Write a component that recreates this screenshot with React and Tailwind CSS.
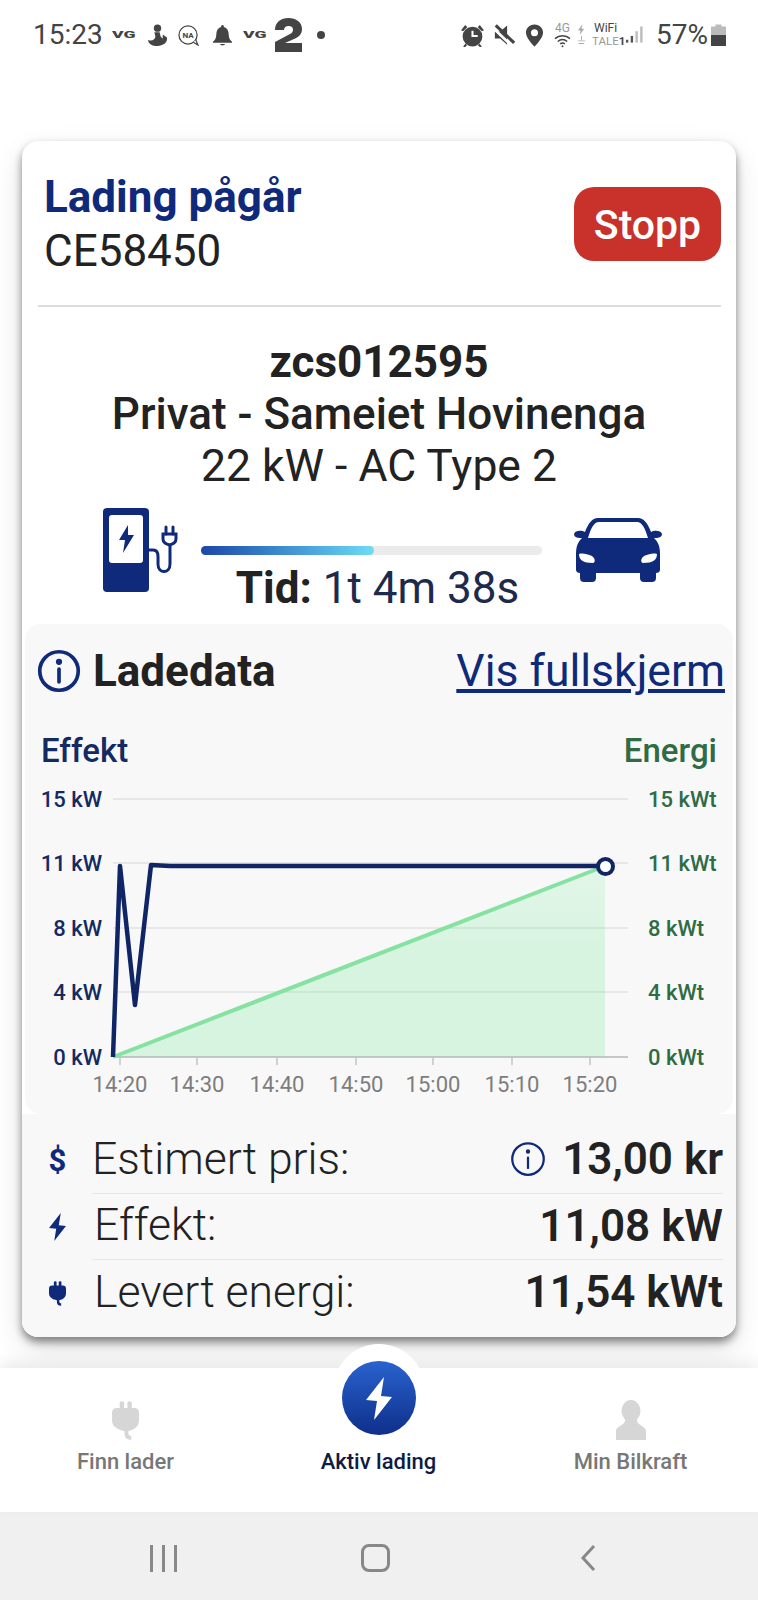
const NAVY = '#0f2a7a'

function Bolt({ className }) {
  return (
    <svg viewBox="0 0 26 43" className={className} fill="currentColor">
      <path d="M18 0 L0 23 L11 24 L8 43 L26 20 L15 19 Z" />
    </svg>
  )
}

function Plug({ className }) {
  return (
    <svg viewBox="0 0 28 40" className={className} fill="currentColor">
      <rect x="8" y="0" width="4.500" height="11" rx="2" />
      <rect x="16" y="0" width="4.500" height="11" rx="2" />
      <path d="M5 7 H23 C26 7 28 9 28 12 V20 C28 26 23 30 17 31 V33 C17 35 18 36 20 36 V40 C15 40 13 38 13 33 V31 C6 30 0 26 0 20 V12 C0 9 2 7 5 7 Z" />
    </svg>
  )
}

function InfoIcon({ className, strokeWidth = 2 }) {
  return (
    <svg viewBox="0 0 24 24" className={className} fill="none" stroke="currentColor" strokeWidth={strokeWidth}>
      <circle cx="12" cy="12" r="10.500" />
      <path d="M12 11 V18" strokeLinecap="round" />
      <circle cx="12" cy="7" r="0.700" fill="currentColor" />
    </svg>
  )
}

function VgMark({ className }) {
  return <span className={`w-[23px] text-[11px] leading-none font-black scale-x-[1.6] scale-y-75 origin-left ${className}`}>VG</span>
}

function StatusBar() {
  return (
    <div className="h-[70px] flex items-center justify-between pl-[33px] pr-[32px] text-[#444]">
      <div className="flex items-center">
        <span className="text-[28px] leading-none w-[79px]">15:23</span>
        <VgMark className="" />
        <svg viewBox="0 0 20 22" className="w-[21px] h-[23px] ml-[12px]" fill="currentColor">
          <circle cx="10" cy="4" r="3.500" />
          <path d="M7 8 L12 8 L13 12 L15 14 L15 10 L19 13 C20 18 15 21 10 21 C5 21 1 19 1 15 C4 17 8 15 8 12 Z" />
        </svg>
        <svg viewBox="0 0 22 22" className="w-[21px] h-[21px] ml-[10px]" fill="none" stroke="currentColor" strokeWidth="1.300">
          <circle cx="10.500" cy="10.500" r="9.500" />
          <path d="M16 18 L21 21 L18.500 15.500" fill="#fff" />
          <text x="10.500" y="13.500" textAnchor="middle" fontSize="8.500" fontWeight="700" fill="currentColor" stroke="none">NA</text>
        </svg>
        <svg viewBox="0 0 22 24" className="w-[21px] h-[23px] ml-[13px]" fill="currentColor">
          <path d="M11 1 C12 1 12.500 2 12.500 3 C16 4 17.500 7 17.500 11 C17.500 15 19 17 21 18.500 V19.500 H1 V18.500 C3 17 4.500 15 4.500 11 C4.500 7 6 4 9.500 3 C9.500 2 10 1 11 1 Z" />
          <path d="M8.500 21 H13.500 C13.500 23 8.500 23 8.500 21 Z" />
        </svg>
        <VgMark className="ml-[10px]" />
        <svg viewBox="0 0 27 34" className="w-[27px] h-[34px] ml-[9px]" fill="currentColor">
          <path d="M0 12 C0 4 6 0 13.500 0 C21 0 27 4 27 11 C27 16 24 19 19 21 L10 25 H27 V34 H0 V24 L15 16 C17 15 18 13.500 18 11.500 C18 9 16 8 13.500 8 C11 8 9 9.500 9 12 Z" />
        </svg>
        <span className="ml-[15px] w-[8px] h-[8px] rounded-full bg-[#444]" />
      </div>
      <div className="flex items-center">
        <svg viewBox="0 0 24 24" className="w-[25px] h-[25px]" fill="currentColor">
          <path d="M1 7 L5 2 L7 4 L3 8 Z M23 7 L19 2 L17 4 L21 8 Z" />
          <path fillRule="evenodd" d="M12 3.500 A9.500 9.500 0 1 1 12 22.500 A9.500 9.500 0 1 1 12 3.500 Z M11 7.500 V13.500 H17 V11.500 H13 V7.500 Z" />
          <path d="M5 20 L3 23 H5 L7 21 Z M19 20 L21 23 H19 L17 21 Z" />
        </svg>
        <svg viewBox="0 0 24 24" className="w-[21px] h-[22px] ml-[9px]" fill="currentColor">
          <path d="M1 8 H7 L15 1 V23 L7 16 H1 Z" />
          <path d="M-1 4 L20 24" stroke="#fff" strokeWidth="3" />
          <path d="M2 1 L23 21" stroke="currentColor" strokeWidth="3.500" />
        </svg>
        <svg viewBox="0 0 20 24" className="w-[19px] h-[23px] ml-[10px]" fill="currentColor">
          <path fillRule="evenodd" d="M10 0.500 C15.500 0.500 19 4.500 19 9 C19 15 10 23.500 10 23.500 C10 23.500 1 15 1 9 C1 4.500 4.500 0.500 10 0.500 Z M10 5.500 A3.700 3.700 0 1 0 10 12.900 A3.700 3.700 0 1 0 10 5.500 Z" />
        </svg>
        <div className="ml-[10px] w-[17px] flex flex-col items-center text-[#999]">
          <span className="text-[12px] leading-[12px]">4G</span>
          <svg viewBox="0 0 18 14" className="w-[17px] h-[14px]" fill="none" stroke="#444" strokeWidth="1.500">
            <path d="M1 4.500 C5.500 0.500 12.500 0.500 17 4.500 M4 7.500 C7 5 11 5 14 7.500 M6.500 10 C8 9 10 9 11.500 10" />
            <circle cx="9" cy="12.500" r="1" fill="#444" stroke="none" />
          </svg>
        </div>
        <svg viewBox="0 0 10 24" className="w-[9px] h-[22px] ml-[6px]" fill="#aaa">
          <path d="M6 0 L1 7 H4 L3 12 L8 5 H5 Z M1 18 H9 V19 H1 Z M2 21 H8 V22 H2 Z" />
          <rect x="4.500" y="13" width="1" height="5" />
        </svg>
        <div className="ml-[6px] w-[28px] flex flex-col items-start">
          <span className="text-[12px] leading-[13px] ml-[2px] text-[#444]">WiFi</span>
          <span className="text-[11.500px] leading-[13px] text-[#999] whitespace-nowrap">TALE<b className="text-[#444]">1</b></span>
        </div>
        <svg viewBox="0 0 20 22" className="w-[19px] h-[22px] ml-[5px]">
          <rect x="1" y="16" width="2.500" height="3" fill="#555" />
          <rect x="6" y="12" width="2.500" height="7" fill="#555" />
          <rect x="11" y="7" width="2.500" height="12" fill="#bbb" />
          <rect x="16" y="2" width="2.500" height="17" fill="#bbb" />
        </svg>
        <span className="ml-[12px] text-[28px] leading-none">57%</span>
        <svg viewBox="0 0 15 22" className="w-[15px] h-[22px] ml-[3px]">
          <path d="M4.500 0.500 H10.500 V2.500 H15 V11 H0 V2.500 H4.500 Z" fill="#bbb" />
          <rect x="0" y="11" width="15" height="11" fill="#444" />
        </svg>
      </div>
    </div>
  )
}

function ChargerIcon() {
  return (
    <svg viewBox="0 0 75 84" className="w-[75px] h-[84px]">
      <rect x="0" y="0" width="46" height="84" rx="4" fill={NAVY} />
      <rect x="6" y="7" width="34" height="48" rx="3" fill="#fff" />
      <path d="M25 17 L16 32 L22 32 L20 45 L31 27 L25 27 Z" fill={NAVY} />
      <path d="M46 42 H50 C56 42 55 48 55 56 C55 66 67 66 67 56 V36" fill="none" stroke={NAVY} strokeWidth="3" />
      <path d="M60 26 H73 V31 C73 35 70 36 66.500 37 C63 36 60 35 60 31 Z" fill="none" stroke={NAVY} strokeWidth="3" />
      <path d="M63 19 V26 M70 19 V26" stroke={NAVY} strokeWidth="3" strokeLinecap="round" />
    </svg>
  )
}

function CarIcon() {
  return (
    <svg viewBox="0 0 88 64" className="w-[88px] h-[64px]">
      <path fill={NAVY} fillRule="evenodd" d="M24 0 H64 C70 0 74 6 77 14 C80 12 87 12 88 16 C88 20 83 20 80 20 C84 24 86 28 86 36 V52 C86 54 84 55 82 55 V60 C82 63 80 64 78 64 H70 C67 64 66 62 66 60 V55 H22 V60 C22 62 21 64 18 64 H10 C8 64 6 63 6 60 V55 C4 55 2 54 2 52 V36 C2 28 4 24 8 20 C5 20 0 20 0 16 C1 12 8 12 11 14 C14 6 18 0 24 0 Z M25 4 C20 4 17 10 14 20 H74 C71 10 68 4 63 4 Z M5 36 C5 42 9 45 19 45 C21 45 22 41 18 38 C13 36 9 35 5 36 Z M83 36 C79 35 75 36 70 38 C66 41 67 45 69 45 C79 45 83 42 83 36 Z" />
    </svg>
  )
}

function Chart() {
  const ys = [[799, '15'], [863, '11'], [928, '8'], [992, '4'], [1057, '0']]
  const xs = [[120, '14:20'], [197, '14:30'], [277, '14:40'], [356, '14:50'], [433, '15:00'], [512, '15:10'], [590, '15:20']]
  return (
    <svg viewBox="25 770 707 344" className="w-[707px] h-[344px] block">
      <defs>
        <linearGradient id="energyFill" x1="0" y1="0" x2="0" y2="1">
          <stop offset="0" stopColor="#74e898" stopOpacity="0.16" />
          <stop offset="0.45" stopColor="#74e898" stopOpacity="0.25" />
        </linearGradient>
      </defs>
      {ys.slice(0, 4).map(([y]) => (
        <line key={y} x1="113" x2="628" y1={y} y2={y} stroke="#e2e2e2" strokeWidth="1.500" />
      ))}
      <path d="M113 1057 L605 866 V1057 Z" fill="url(#energyFill)" />
      <line x1="113" x2="628" y1="1057" y2="1057" stroke="#b4b8b5" strokeWidth="1.500" />
      {xs.map(([x, label]) => (
        <g key={label}>
          <line x1={x} x2={x} y1="1057" y2="1065" stroke="#c4c4c4" strokeWidth="1.500" />
          <text x={x} y="1092" textAnchor="middle" className="text-[22px] fill-[#7d7d7d]">{label}</text>
        </g>
      ))}
      {ys.map(([y, v]) => (
        <g key={v} className="text-[22px] font-medium">
          <text x="102" y={y + 8} textAnchor="end" className="fill-[#142a63]">{v} kW</text>
          <text x="648" y={y + 8} className="fill-[#2f6b45]">{v} kWt</text>
        </g>
      ))}
      <path d="M113 1057 L605 866" stroke="#86e2a1" strokeWidth="4" fill="none" />
      <path d="M113 1057 L120 866 L135 1005 L151 865 L170 866 H605" stroke="#0f2566" strokeWidth="4.500" fill="none" strokeLinejoin="round" />
      <circle cx="605.500" cy="866.500" r="7.500" fill="#fff" stroke="#0f2566" strokeWidth="4" />
    </svg>
  )
}

function Row({ icon, label, children, last, className, labelClass }) {
  return (
    <div className={`flex items-center ${className}`}>
      <div className="w-[70px] flex justify-center text-[#0f2a7a] shrink-0 pl-[1px]">{icon}</div>
      <div className={`flex-1 h-full flex items-center justify-between pb-[2px] ${last ? '' : 'border-b border-[#e6e6e6]'}`}>
        <span className={`text-[44.500px] font-light text-[#222] leading-none ${labelClass}`}>{label}</span>
        {children}
      </div>
    </div>
  )
}

function Tab({ icon, label }) {
  return (
    <div className="flex flex-col items-center justify-end w-[253px] pb-[37px]">
      {icon}
      <span className="text-[22px] leading-[26px] font-medium mt-[9px] text-[#777]">{label}</span>
    </div>
  )
}

export default function App() {
  return (
    <div className="w-[758px] h-[1600px] overflow-hidden bg-white flex flex-col font-['Roboto',sans-serif]">
      <StatusBar />

      <div className="mt-[71px] mx-[22px] w-[714px] h-[1196px] rounded-[16px] bg-white shadow-[0_5px_9px_rgba(0,0,0,0.45),0_12px_30px_rgba(0,0,0,0.12)] flex flex-col shrink-0">
        <div className="mx-[16px] mr-[15px] h-[166px] border-b-2 border-[#dcdcdc] flex justify-between items-start">
          <div className="pl-[6px] pt-[29px]">
            <div className="text-[44px] font-bold leading-[54px] text-[#0f2a7a]">Lading pågår</div>
            <div className="text-[44px] leading-[54px] text-[#222]">CE58450</div>
          </div>
          <button className="mt-[46px] w-[147px] h-[74px] pt-[3px] rounded-[20px] bg-[#c8322b] text-white text-[41px] font-medium">Stopp</button>
        </div>

        <div className="mt-[29px] text-center text-[44px] leading-[52px] text-[#222]">
          <div className="font-bold">zcs012595</div>
          <div className="font-medium">Privat - Sameiet Hovinenga</div>
          <div className="text-[44.500px]">22 kW - AC Type 2</div>
        </div>

        <div className="mt-[16px] h-[116px] flex items-start pl-[81px]">
          <ChargerIcon />
          <div className="ml-[23px] w-[341px] flex flex-col items-center pt-[38px]">
            <div className="w-full h-[9px] rounded-full bg-[#ebebeb]">
              <div className="h-full w-[173px] rounded-full bg-gradient-to-r from-[#1f46a8] to-[#6fdcf5]" />
            </div>
            <div className="text-[44px] leading-[48px] mt-[9px] ml-[12px] text-[#1c2a4d] whitespace-nowrap">
              <span className="font-bold text-[#222]">Tid:</span> 1t 4m 38s
            </div>
          </div>
          <div className="ml-[32px] pt-[10px]"><CarIcon /></div>
        </div>

        <div className="mx-[3px] rounded-[16px] bg-[#f8f8f8] h-[490px] shrink-0">
          <div className="h-[106px] flex items-center justify-between pl-[12px] pr-[8px] pb-[12px]">
            <div className="flex items-center">
              <InfoIcon className="w-[44px] h-[44px] text-[#0f2a7a]" />
              <span className="ml-[12px] text-[44px] font-bold text-[#222] leading-none">Ladedata</span>
            </div>
            <a className="text-[44.500px] text-[#0f2a7a] underline leading-none">Vis fullskjerm</a>
          </div>
          <div className="h-[40px] flex items-center justify-between pl-[16px] pr-[16px] text-[33px] font-medium leading-none">
            <span className="text-[#142a63]">Effekt</span>
            <span className="text-[#2f6b45]">Energi</span>
          </div>
          <Chart />
        </div>

        <div className="flex-1 bg-[#f8f8f8] rounded-b-[16px] pt-[13px] pr-[13px]">
          <Row className="h-[67px]" icon={<span className="text-[31px] font-bold leading-none">$</span>} label="Estimert pris:">
            <div className="flex items-center">
              <InfoIcon className="w-[36px] h-[36px] text-[#0f2a7a]" strokeWidth={1.500} />
              <span className="ml-[16px] text-[44px] font-semibold text-[#222] leading-none">13,00 kr</span>
            </div>
          </Row>
          <Row className="h-[66px]" labelClass="ml-[2px]" icon={<Bolt className="w-[17px] h-[28px]" />} label="Effekt:">
            <span className="text-[44px] font-semibold text-[#222] leading-none">11,08 kW</span>
          </Row>
          <Row className="h-[66px]" labelClass="ml-[2px]" icon={<Plug className="w-[17px] h-[25px]" />} label="Levert energi:" last>
            <span className="text-[44px] font-semibold text-[#222] leading-none">11,54 kWt</span>
          </Row>
        </div>
      </div>

      <div className="relative mt-[31px] h-[144px] shrink-0 bg-white shadow-[0_-6px_14px_rgba(0,0,0,0.08)] flex">
        <div className="absolute left-[333px] -top-[24px] w-[92px] h-[92px] rounded-full bg-white" />
        <div className="w-[253px] -ml-[1px] flex justify-center"><Tab label="Finn lader" icon={<Plug className="w-[27px] h-[39px] text-[#d6d6d6]" />} /></div>
        <div className="relative flex flex-col items-center justify-end w-[253px] pb-[37px]">
          <div className="absolute top-[-7px] w-[74px] h-[74px] rounded-full bg-gradient-to-b from-[#2a63cf] to-[#0f2f8a] flex items-center justify-center text-white">
            <Bolt className="w-[26px] h-[43px]" />
          </div>
          <span className="text-[22px] leading-[26px] font-medium text-[#0e1c45]">Aktiv lading</span>
        </div>
        <div className="-ml-[1px] flex">
          <Tab label="Min Bilkraft" icon={
            <svg viewBox="0 0 30 40" className="w-[30px] h-[40px] text-[#d6d6d6]" fill="currentColor">
              <ellipse cx="15" cy="11" rx="9.500" ry="11" />
              <path d="M9 20 C9 25 3 25 0 30 V40 H30 V30 C27 25 21 25 21 20 Z" />
            </svg>
          } />
        </div>
      </div>

      <div className="flex-1 bg-[#f0f0f0] flex items-center pl-[150px] pt-[4px]">
        <div className="w-[27px] flex justify-between">
          <span className="w-[3px] h-[27px] bg-[#888]" />
          <span className="w-[3px] h-[27px] bg-[#888]" />
          <span className="w-[3px] h-[27px] bg-[#888]" />
        </div>
        <div className="ml-[184px] w-[29px] h-[28px] border-[3px] border-[#888] rounded-[8px]" />
        <svg viewBox="0 0 16 28" className="ml-[190px] w-[16px] h-[28px]" fill="none" stroke="#888" strokeWidth="3">
          <path d="M14 2 L3 14 L14 26" />
        </svg>
      </div>
    </div>
  )
}
